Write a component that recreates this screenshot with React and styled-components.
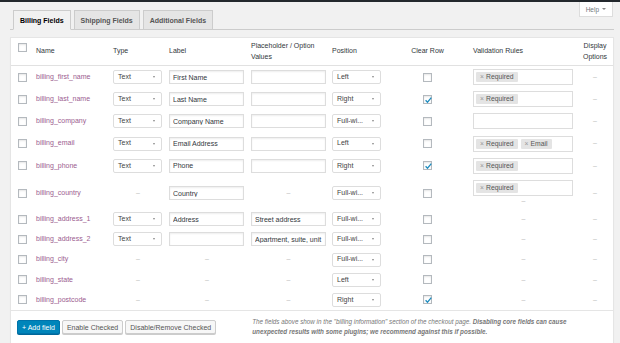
import React from 'react';
import styled, { createGlobalStyle } from 'styled-components';

const GlobalStyle = createGlobalStyle`
  html, body {
    margin: 0;
    padding: 0;
    background: #f1f1f1;
  }
  body {
    font-family: "Liberation Sans", Arial, sans-serif;
    font-size: 7px;
    color: #444;
  }
`;

const AdminBar = styled.div`
  height: 2px;
  background: #23282d;
`;

const Header = styled.div`
  display: flex;
  justify-content: space-between;
  align-items: flex-end;
  margin: 0 6px 0 10px;
  border-bottom: 1px solid #ccc;
`;

const Tabs = styled.nav`
  display: flex;
  gap: 3px;
  padding: 8px 0 0 3px;
`;

const Tab = styled.span`
  display: block;
  box-sizing: border-box;
  height: 20px;
  line-height: 19px;
  padding: 0 6px;
  margin-bottom: -1px;
  border: 1px solid #ccc;
  border-bottom-color: ${p => (p.$active ? '#f1f1f1' : '#ccc')};
  background: ${p => (p.$active ? '#f1f1f1' : '#e5e5e5')};
  color: ${p => (p.$active ? '#000' : '#555')};
  font-weight: bold;
  font-size: 7px;
`;

const HelpButton = styled.button`
  align-self: flex-start;
  height: 15px;
  margin-right: 1px;
  padding: 0 6px;
  background: #fff;
  border: 1px solid #ddd;
  border-top: none;
  color: #72777c;
  font-family: inherit;
  font-size: 6.5px;
  display: flex;
  align-items: center;
  gap: 3px;

  &::after {
    content: '';
    border-top: 2.5px solid #888;
    border-left: 2px solid transparent;
    border-right: 2px solid transparent;
  }
`;

const Panel = styled.div`
  margin: 7px 6px 0 10px;
  background: #fff;
  border: 1px solid #e5e5e5;
  box-shadow: 0 1px 1px rgba(0, 0, 0, 0.04);
`;

const Table = styled.table`
  width: 100%;
  border-collapse: collapse;
  table-layout: fixed;
`;

const Th = styled.th`
  height: ${p => (p.$check ? '22px' : '27px')};
  padding: ${p => (p.$check ? '5px 0 0' : '0 3px')};
  text-align: ${p => p.$align || 'left'};
  vertical-align: ${p => (p.$check ? 'top' : 'middle')};
  font-weight: normal;
  color: #32373c;
  line-height: 1.55;
  border-bottom: 1px solid #e1e1e1;
`;

const Td = styled.td`
  padding: ${p => (p.$check ? '3.1px 0' : '3.1px 3px')};
  text-align: ${p => p.$align || 'left'};
  vertical-align: middle;
  color: #555;
  line-height: 1.2;
`;

const FieldName = styled.span`
  color: #9b5c8f;
`;

const Box = styled.span`
  display: block;
  box-sizing: border-box;
  width: 9px;
  height: 9px;
  margin: 0 auto;
  background: #fff;
  border: 1px solid #b4b9be;
  box-shadow: inset 0 1px 2px rgba(0, 0, 0, 0.1);
  position: relative;

  svg {
    position: absolute;
    left: 0;
    top: 0;
  }
`;

const Input = styled.input`
  display: block;
  box-sizing: border-box;
  width: 75px;
  height: 14px;
  margin: 0;
  padding: 0 3px;
  border: 1px solid #ddd;
  border-radius: 0;
  box-shadow: inset 0 1px 2px rgba(0, 0, 0, 0.07);
  background: #fff;
  font-family: inherit;
  font-size: 7px;
  color: #32373c;
  outline: none;
`;

const Select = styled.div`
  box-sizing: border-box;
  width: 49px;
  height: 14px;
  padding: 0 4px;
  border: 1px solid #ddd;
  border-radius: 2px;
  background: #fff;
  display: flex;
  align-items: center;
  justify-content: space-between;
  color: #444;
  white-space: nowrap;

  &::after {
    content: '';
    margin-right: 2px;
    border-top: 2px solid #888;
    border-left: 1.5px solid transparent;
    border-right: 1.5px solid transparent;
  }
`;

const Rules = styled.div`
  box-sizing: border-box;
  width: 100px;
  height: 16px;
  padding: 2px;
  border: 1px solid #ddd;
  display: flex;
  gap: 3px;
  background: #fff;
`;

const Tag = styled.span`
  display: flex;
  align-items: center;
  gap: 2px;
  height: 10px;
  padding: 0 4px;
  background: #e4e4e4;
  border-radius: 1px;
  color: #555;
  font-size: 6.8px;

  b {
    font-weight: normal;
    color: #999;
  }
`;

const Dash = styled.span`
  color: #bbb;
`;

const UnderDash = styled.div`
  text-align: center;
  color: #bbb;
  line-height: 10px;
`;

const Footer = styled.div`
  display: flex;
  align-items: center;
  padding: 6px 6px 7px;
  border-top: 1px solid #e5e5e5;
`;

const Actions = styled.div`
  display: flex;
  flex: none;
  gap: 2px;
`;

const Button = styled.button`
  box-sizing: border-box;
  height: 14px;
  padding: 0 4px;
  margin: 0;
  border-radius: 2px;
  border: 1px solid ${p => (p.$primary ? '#0073aa' : '#ccc')};
  background: ${p => (p.$primary ? '#0085ba' : '#f7f7f7')};
  box-shadow: 0 1px 0 ${p => (p.$primary ? '#006799' : '#ccc')};
  color: ${p => (p.$primary ? '#fff' : '#555')};
  font-family: inherit;
  font-size: 7px;
  white-space: nowrap;
`;

const Note = styled.p`
  flex: 1;
  margin: 0 8px 0 36px;
  font-style: italic;
  font-size: 6.3px;
  line-height: 10px;
  color: #777;

  strong {
    font-weight: bold;
  }
`;

const Check = ({ checked }) => (
  <Box>
    {checked && (
      <svg width="9" height="9" viewBox="0 0 9 9">
        <path d="M1.6 4.3 L3.5 6.2 L7.3 1.6" fill="none" stroke="#1e8cbe" strokeWidth="1.3" />
      </svg>
    )}
  </Box>
);

const fields = [
  { name: 'billing_first_name', type: 'Text', label: 'First Name', ph: '', pos: 'Left', clear: false, rules: ['Required'] },
  { name: 'billing_last_name', type: 'Text', label: 'Last Name', ph: '', pos: 'Right', clear: true, rules: ['Required'] },
  { name: 'billing_company', type: 'Text', label: 'Company Name', ph: '', pos: 'Full-wi...', clear: false, rules: [] },
  { name: 'billing_email', type: 'Text', label: 'Email Address', ph: '', pos: 'Left', clear: false, rules: ['Required', 'Email'] },
  { name: 'billing_phone', type: 'Text', label: 'Phone', ph: '', pos: 'Right', clear: true, rules: ['Required'] },
  { name: 'billing_country', type: null, label: 'Country', ph: null, pos: 'Full-wi...', clear: false, rules: ['Required'], extraDash: true },
  { name: 'billing_address_1', type: 'Text', label: 'Address', ph: 'Street address', pos: 'Full-wi...', clear: false, rules: null },
  { name: 'billing_address_2', type: 'Text', label: '', ph: 'Apartment, suite, unit etc. (optional)', pos: 'Full-wi...', clear: false, rules: null },
  { name: 'billing_city', type: null, label: null, ph: null, pos: 'Full-wi...', clear: false, rules: null },
  { name: 'billing_state', type: null, label: null, ph: null, pos: 'Left', clear: false, rules: null },
  { name: 'billing_postcode', type: null, label: null, ph: null, pos: 'Right', clear: true, rules: null },
];

const dash = <Dash>–</Dash>;

export default function App() {
  return (
    <>
      <GlobalStyle />
      <AdminBar />
      <Header>
        <Tabs>
          <Tab $active>Billing Fields</Tab>
          <Tab>Shipping Fields</Tab>
          <Tab>Additional Fields</Tab>
        </Tabs>
        <HelpButton>Help</HelpButton>
      </Header>

      <Panel>
        <Table>
          <colgroup>
            <col style={{ width: 22 }} />
            <col style={{ width: 77 }} />
            <col style={{ width: 56 }} />
            <col style={{ width: 82 }} />
            <col style={{ width: 81 }} />
            <col style={{ width: 56 }} />
            <col style={{ width: 85 }} />
            <col style={{ width: 107 }} />
            <col />
          </colgroup>
          <thead>
            <tr>
              <Th $check><Check /></Th>
              <Th>Name</Th>
              <Th>Type</Th>
              <Th>Label</Th>
              <Th>Placeholder / Option Values</Th>
              <Th>Position</Th>
              <Th $align="center">Clear Row</Th>
              <Th>Validation Rules</Th>
              <Th $align="center">Display Options</Th>
            </tr>
          </thead>
          <tbody>
            {fields.map(f => (
              <tr key={f.name}>
                <Td $check><Check /></Td>
                <Td><FieldName>{f.name}</FieldName></Td>
                <Td $align={f.type ? 'left' : 'center'}>
                  {f.type ? <Select>{f.type}</Select> : dash}
                </Td>
                <Td $align={f.label === null ? 'center' : 'left'}>
                  {f.label === null ? dash : <Input readOnly value={f.label} />}
                </Td>
                <Td $align={f.ph === null ? 'center' : 'left'}>
                  {f.ph === null ? dash : <Input readOnly value={f.ph} />}
                </Td>
                <Td><Select>{f.pos}</Select></Td>
                <Td><Check checked={f.clear} /></Td>
                <Td $align={f.rules ? 'left' : 'center'}>
                  {f.rules ? (
                    <>
                      <Rules>
                        {f.rules.map(r => (
                          <Tag key={r}><b>×</b>{r}</Tag>
                        ))}
                      </Rules>
                      {f.extraDash && <UnderDash>–</UnderDash>}
                    </>
                  ) : dash}
                </Td>
                <Td $align="center">{dash}</Td>
              </tr>
            ))}
          </tbody>
        </Table>
        <Footer>
          <Actions>
            <Button $primary>+ Add field</Button>
            <Button>Enable Checked</Button>
            <Button>Disable/Remove Checked</Button>
          </Actions>
          <Note>
            The fields above show in the "billing information" section of the checkout page.{' '}
            <strong>Disabling core fields can cause</strong>{' '}
            <strong>unexpected results with some plugins; we recommend against this if possible.</strong>
          </Note>
        </Footer>
      </Panel>
    </>
  );
}
